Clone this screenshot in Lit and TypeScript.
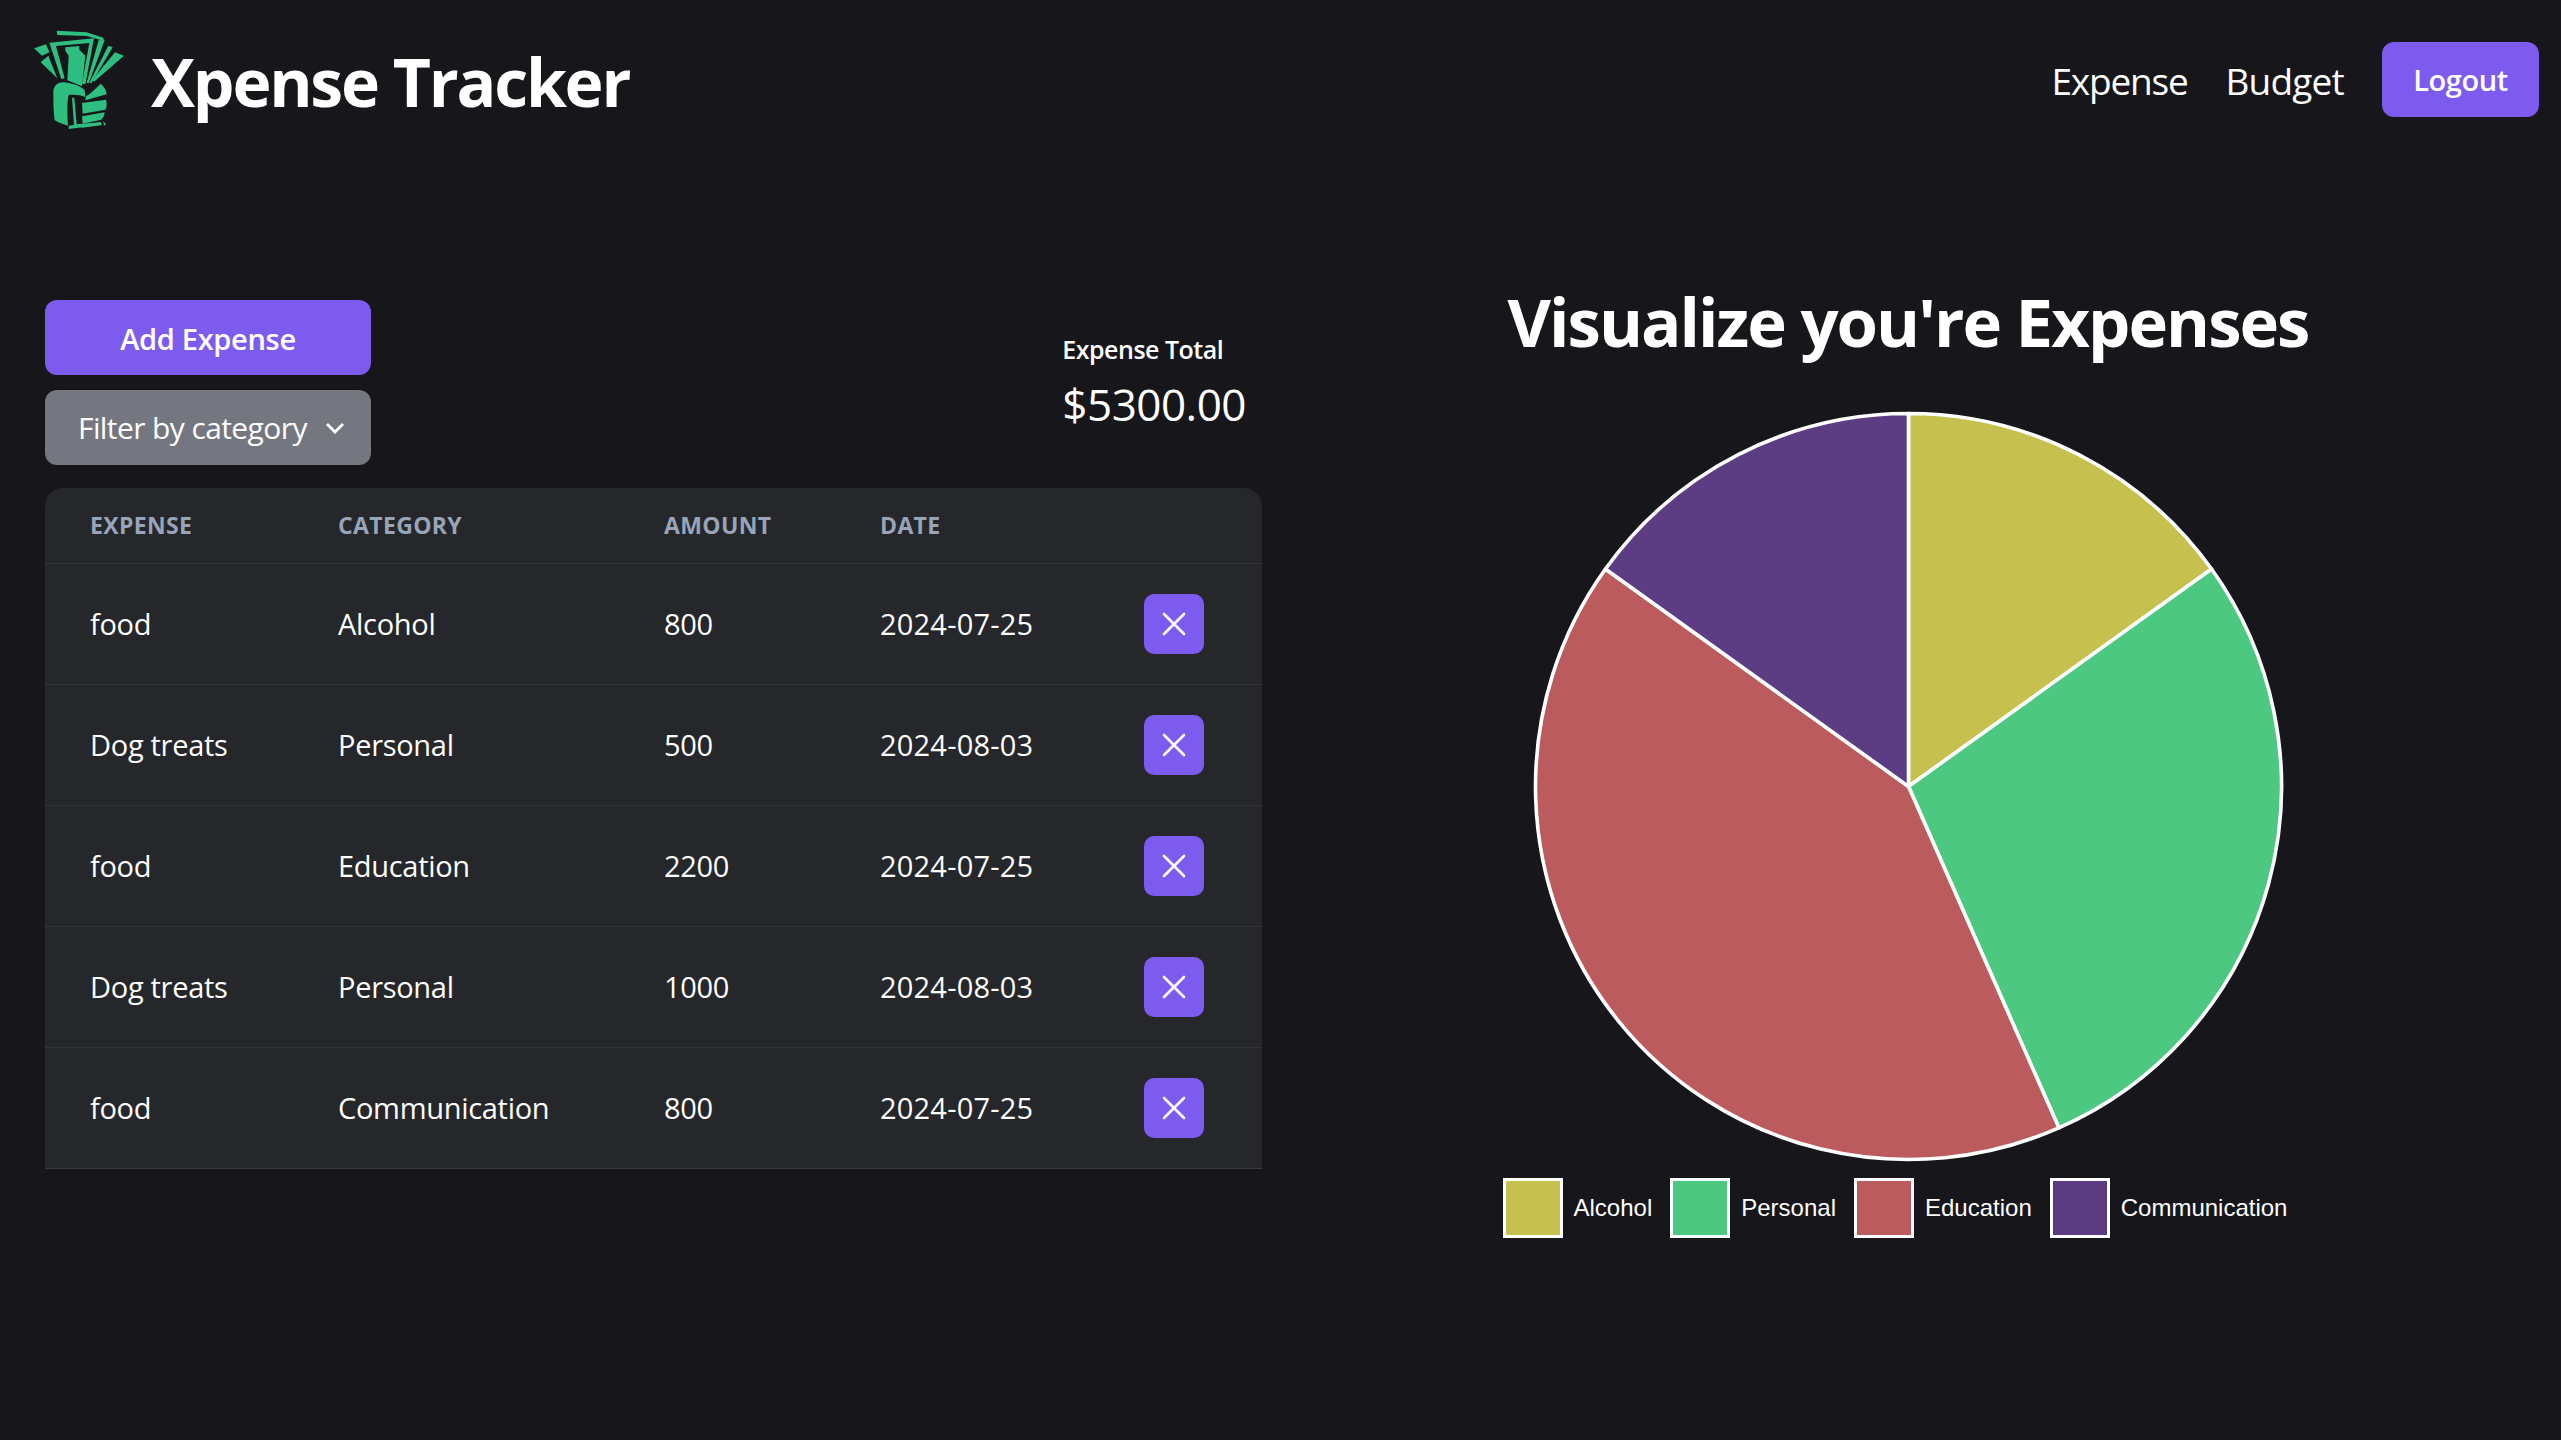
import { LitElement, css, html, svg } from "lit";
import { customElement } from "lit/decorators.js";

interface Expense {
  name: string;
  category: string;
  amount: number;
  date: string;
}

const EXPENSES: Expense[] = [
  { name: "food", category: "Alcohol", amount: 800, date: "2024-07-25" },
  { name: "Dog treats", category: "Personal", amount: 500, date: "2024-08-03" },
  { name: "food", category: "Education", amount: 2200, date: "2024-07-25" },
  { name: "Dog treats", category: "Personal", amount: 1000, date: "2024-08-03" },
  { name: "food", category: "Communication", amount: 800, date: "2024-07-25" },
];

const CATEGORY_COLORS: Record<string, string> = {
  Alcohol: "#c6c04f",
  Personal: "#4cc880",
  Education: "#bb5b5e",
  Communication: "#5c3d84",
};

const PIE_SIZE = 755;
const PIE_RADIUS = 373;

function slicePath(start: number, end: number) {
  const c = PIE_SIZE / 2;
  const x1 = c + PIE_RADIUS * Math.sin(start);
  const y1 = c - PIE_RADIUS * Math.cos(start);
  const x2 = c + PIE_RADIUS * Math.sin(end);
  const y2 = c - PIE_RADIUS * Math.cos(end);
  const large = end - start > Math.PI ? 1 : 0;
  return `M${c} ${c}L${x1} ${y1}A${PIE_RADIUS} ${PIE_RADIUS} 0 ${large} 1 ${x2} ${y2}Z`;
}

@customElement("app-root")
export class AppRoot extends LitElement {
  static styles = css`
    :host {
      display: block;
      min-height: 1440px;
      background: #16161b;
      color: #fff;
      font-family: "Open Sans", "Noto Sans", sans-serif;
    }

    header {
      display: flex;
      align-items: center;
      justify-content: space-between;
      height: 158px;
      padding: 0 22px 0 33px;
    }

    .brand {
      display: flex;
      align-items: center;
      gap: 24px;
    }

    .brand svg {
      display: block;
      width: 94px;
      height: 100px;
    }

    .brand h1,
    .chart h2 {
      margin: 0;
      font-size: 66px;
      line-height: 90px;
      font-weight: 700;
      letter-spacing: -2.2px;
    }

    .brand h1 {
      padding-top: 3px;
    }

    .chart h2 {
      font-size: 67px;
      letter-spacing: -1.95px;
    }

    nav {
      display: flex;
      align-items: center;
    }

    nav a {
      padding-top: 2px;
      font-size: 37px;
      letter-spacing: -1.2px;
      margin-right: 38px;
    }

    nav a + a {
      letter-spacing: -0.8px;
    }

    button {
      border: 0;
      border-radius: 12px;
      color: #fff;
      font: inherit;
      background: #7e5bef;
    }

    .logout {
      width: 157px;
      height: 75px;
      font-size: 29px;
      font-weight: 600;
      letter-spacing: -0.4px;
    }

    main {
      display: grid;
      grid-template-columns: 1262px 1fr;
      padding-top: 142px;
    }

    .expenses {
      padding-left: 45px;
    }

    .toolbar {
      display: flex;
      justify-content: space-between;
      align-items: flex-start;
      padding-right: 16px;
      margin-bottom: 23px;
    }

    .actions {
      display: flex;
      flex-direction: column;
      gap: 15px;
      width: 326px;
    }

    .add {
      height: 75px;
      padding-top: 2px;
      font-size: 29px;
      font-weight: 600;
      letter-spacing: -0.3px;
    }

    .filter {
      display: flex;
      align-items: center;
      justify-content: space-between;
      height: 75px;
      padding: 0 26px 0 33px;
      background: #74777f;
      font-size: 30px;
      letter-spacing: -0.6px;
    }

    .filter svg {
      display: block;
      width: 20px;
      height: 12px;
    }

    .total {
      padding-top: 32px;
    }

    .total-label {
      font-size: 25px;
      line-height: 34px;
      font-weight: 600;
      letter-spacing: -0.5px;
    }

    .total-value {
      margin-top: 8px;
      font-size: 44px;
      line-height: 60px;
      font-weight: 500;
      letter-spacing: -0.5px;
    }

    table {
      width: 1217px;
      table-layout: fixed;
      border-collapse: separate;
      border-spacing: 0;
      background: #25272b;
      border-radius: 18px 18px 0 0;
      border-bottom: 1px solid #3a3c40;
    }

    th,
    td {
      padding: 0;
      text-align: left;
    }

    th {
      height: 73px;
      padding-bottom: 2px;
      font-size: 23px;
      font-weight: 700;
      color: #98a4b8;
      letter-spacing: 0.35px;
      text-transform: uppercase;
    }

    td {
      height: 118px;
      padding-bottom: 2px;
      border-top: 1px solid #33353a;
      font-size: 29px;
      letter-spacing: -0.3px;
    }

    td.date {
      letter-spacing: 0.2px;
    }

    td.action {
      padding-bottom: 0;
    }

    .first {
      padding-left: 45px;
    }

    .delete {
      display: flex;
      align-items: center;
      justify-content: center;
      width: 60px;
      height: 60px;
      padding: 0;
      border-radius: 10px;
    }

    .delete svg {
      display: block;
      width: 24px;
      height: 24px;
    }

    .chart {
      display: flex;
      flex-direction: column;
      align-items: center;
      padding-right: 7px;
      margin-top: -24px;
    }

    .pie {
      display: block;
      margin-top: 43px;
    }

    .legend {
      display: flex;
      margin-top: 14px;
      padding-right: 26px;
      gap: 18px;
      font-family: "Liberation Sans", Arial, sans-serif;
      font-size: 24px;
    }

    .legend-item {
      display: flex;
      align-items: center;
      gap: 11px;
    }

    .swatch {
      box-sizing: border-box;
      width: 60px;
      height: 60px;
      border: 3px solid #fff;
    }
  `;

  private renderLogo() {
    return html`<svg viewBox="0 0 94 100" fill="#2dbe80" aria-hidden="true">
      <g transform="translate(-13 -14) scale(0.3333)">
        <polygon points="110,47 200,52 250,68 252,78 200,63 112,60"></polygon>
        <polygon points="42,100 78,88 88,112 66,122"></polygon>
        <polygon points="62,142 85,122 112,190"></polygon>
        <polygon points="88,83 222,70 196,208 186,206 208,84 108,93 134,190 124,192"></polygon>
        <polygon points="136,97 178,93 178,104 196,122 186,214 142,196 146,122 136,108"></polygon>
        <polygon points="236,75 254,76 206,205 200,203"></polygon>
        <polygon points="265,92 278,97 214,205 208,203"></polygon>
        <polygon points="285,112 312,122 222,200 216,196"></polygon>
        <path d="M100 232c0-20 14-32 32-30 24 3 50 10 62 24l2 20c-14-6-34-8-50-6-6 22-4 60-2 92-14-4-30-10-40-16-4-28-4-56-4-84z"></path>
        <path d="M198 244c14-8 28-22 44-38 10 8 17 20 18 32l-64 18z"></path>
        <path d="M186 264l72-10c3 12 3 22-2 30l-68 12z"></path>
        <path d="M186 304l68-12c0 8-4 16-10 22l-56 12z"></path>
        <path d="M184 333l58-12 4 9-60 8z"></path>
        <polygon points="156,248 163,248 170,328 240,322 242,330 146,342 146,332 162,330"></polygon>
        <polygon points="250,318 258,328 252,332"></polygon>
      </g>
    </svg>`;
  }

  private renderPie(categories: [string, number][], total: number) {
    let angle = 0;
    const slices = categories.map(([name, value]) => {
      const start = angle;
      angle += (value / total) * Math.PI * 2;
      return svg`<path d=${slicePath(start, angle)} fill=${CATEGORY_COLORS[name]}
        stroke="#fff" stroke-width="3.6" stroke-linejoin="round"></path>`;
    });
    return html`<svg class="pie" width=${PIE_SIZE} height=${PIE_SIZE}>${slices}</svg>`;
  }

  render() {
    const totals = new Map<string, number>();
    for (const e of EXPENSES) {
      totals.set(e.category, (totals.get(e.category) ?? 0) + e.amount);
    }
    const categories = [...totals.entries()];
    const total = EXPENSES.reduce((sum, e) => sum + e.amount, 0);

    return html`
      <header>
        <div class="brand">
          ${this.renderLogo()}
          <h1>Xpense Tracker</h1>
        </div>
        <nav>
          <a>Expense</a>
          <a>Budget</a>
          <button class="logout">Logout</button>
        </nav>
      </header>
      <main>
        <section class="expenses">
          <div class="toolbar">
            <div class="actions">
              <button class="add">Add Expense</button>
              <button class="filter">
                Filter by category
                <svg viewBox="0 0 20 12" fill="none" stroke="#fff" stroke-width="2.8">
                  <path d="M2 2l8 8 8-8"></path>
                </svg>
              </button>
            </div>
            <div class="total">
              <div class="total-label">Expense Total</div>
              <div class="total-value">$${total.toFixed(2)}</div>
            </div>
          </div>
          <table>
            <colgroup>
              <col style="width:293px" />
              <col style="width:326px" />
              <col style="width:216px" />
              <col style="width:264px" />
              <col />
            </colgroup>
            <thead>
              <tr>
                <th class="first">Expense</th>
                <th>Category</th>
                <th>Amount</th>
                <th>Date</th>
                <th></th>
              </tr>
            </thead>
            <tbody>
              ${EXPENSES.map(
                (e) => html`<tr>
                  <td class="first">${e.name}</td>
                  <td>${e.category}</td>
                  <td>${e.amount}</td>
                  <td class="date">${e.date}</td>
                  <td class="action">
                    <button class="delete" aria-label="Delete">
                      <svg viewBox="0 0 24 24" fill="none" stroke="#fff" stroke-width="2.6" stroke-linecap="round">
                        <path d="M2 2l20 20M22 2L2 22"></path>
                      </svg>
                    </button>
                  </td>
                </tr>`
              )}
            </tbody>
          </table>
        </section>
        <section class="chart">
          <h2>Visualize you're Expenses</h2>
          ${this.renderPie(categories, total)}
          <div class="legend">
            ${categories.map(
              ([name]) => html`<div class="legend-item">
                <div class="swatch" style="background:${CATEGORY_COLORS[name]}"></div>
                <span>${name}</span>
              </div>`
            )}
          </div>
        </section>
      </main>
    `;
  }
}
